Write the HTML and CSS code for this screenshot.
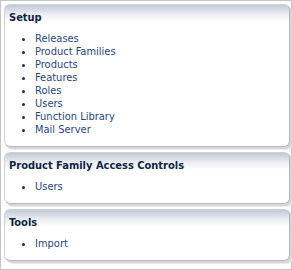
FILE: index.html
```html
<!DOCTYPE html>
<html lang="en">
<head>
    <meta charset="UTF-8">
    <title>Administration</title>
    <link rel="stylesheet" href="styles.css">
</head>
<body>
    <div class="frame">
        <div class="panel">
            <h2>Setup</h2>
            <ul>
                <li><a href="#">Releases</a></li>
                <li><a href="#">Product Families</a></li>
                <li><a href="#">Products</a></li>
                <li><a href="#">Features</a></li>
                <li><a href="#">Roles</a></li>
                <li><a href="#">Users</a></li>
                <li><a href="#">Function Library</a></li>
                <li><a href="#">Mail Server</a></li>
            </ul>
        </div>
        <div class="panel">
            <h2>Product Family Access Controls</h2>
            <ul>
                <li><a href="#">Users</a></li>
            </ul>
        </div>
        <div class="panel">
            <h2>Tools</h2>
            <ul>
                <li><a href="#">Import</a></li>
            </ul>
        </div>
    </div>
</body>
</html>
```

FILE: styles.css
```css
body {
    margin: 0;
    font-family: "DejaVu Sans Condensed", "DejaVu Sans", sans-serif;
    font-size: 11px;
    background-color: #fff;
}
.frame {
    border: 1px solid #c4c4c4;
    padding: 3px 0 0 3px;
    box-sizing: border-box;
    width: 292px;
    height: 270px;
    display: flex;
    flex-direction: column;
    gap: 5px;
}
.panel {
    width: 280px;
    border: 1px solid #cdd1d8;
    border-right-color: #b4b4b4;
    border-bottom-color: #bababa;
    border-radius: 6px;
    background: linear-gradient(#c3c9d6 0, #eef0f4 10px, #fff 17px);
    box-shadow: 2px 2px 0 #d6d6d6, 3px 3px 0 #ececec;
    padding: 6px 0 10px 4px;
}
h2 {
    margin: 0;
    font-size: 11px;
    line-height: 14px;
    font-weight: bold;
    color: #0f2744;
}
ul {
    margin: 7px 0 0 0;
    padding-left: 26px;
    line-height: 13px;
    color: #1a2f55;
}
a {
    color: #1f4682;
    text-decoration: none;
}
```
